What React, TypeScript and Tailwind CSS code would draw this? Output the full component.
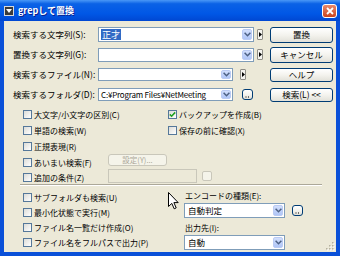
import React from "react";

const Chevron = () => (
  <svg width="7" height="5" viewBox="0 0 7 5">
    <path d="M0.6 0.8 L3.5 3.7 L6.4 0.8" fill="none" stroke="#4D6185" strokeWidth="1.5" />
  </svg>
);

function Combo({ className, children }: { className: string; children?: React.ReactNode }) {
  return (
    <div className={`flex items-stretch border border-[#7F9DB9] bg-white ${className}`}>
      <div className="flex flex-1 items-center overflow-hidden whitespace-nowrap pl-[2px]">{children}</div>
      <div className="m-[1px] flex w-[10px] items-center justify-center rounded-[2px] border border-[#BACBF4] bg-linear-to-b from-[#D2DFFD] to-[#AFC5F6]">
        <Chevron />
      </div>
    </div>
  );
}

function Btn({ className, children, disabled }: { className: string; children?: React.ReactNode; disabled?: boolean }) {
  return (
    <div
      className={`flex items-center justify-center rounded-[3px] border ${
        disabled
          ? "border-[#C9C7BA] bg-[#F5F4EA] text-[#ACA899]"
          : "border-[#003C74] bg-linear-to-b from-white via-[#F4F3EE] to-[#E2E1D9] text-black"
      } ${className}`}
    >
      {children}
    </div>
  );
}

function Arrow() {
  return (
    <div className="flex h-[11px] w-[6px] items-center justify-center rounded-[1px] border border-[#8E8D86] bg-[#F4F3EE]">
      <svg width="3" height="5" viewBox="0 0 3 5">
        <path d="M0 0 L3 2.5 L0 5Z" fill="#000" />
      </svg>
    </div>
  );
}

function Dots({ className }: { className: string }) {
  return (
    <Btn className={`h-[11px] w-[11px] ${className}`}>
      <svg width="5" height="9" viewBox="0 0 5 9">
        <rect x="0.5" y="6.5" width="1" height="1" fill="#000" />
        <rect x="3" y="6.5" width="1" height="1" fill="#000" />
      </svg>
    </Btn>
  );
}

function Box({ checked }: { checked?: boolean }) {
  return (
    <span className="flex h-[9px] w-[9px] shrink-0 items-center justify-center border border-[#55789A] bg-linear-to-br from-[#DCDCD7] to-white">
      {checked && (
        <svg width="7" height="7" viewBox="0 0 7 7">
          <path d="M0.8 3.4 L2.6 5.2 L6.2 1.4" fill="none" stroke="#21A121" strokeWidth="1.6" />
        </svg>
      )}
    </span>
  );
}

function Check({ label, checked, className = "" }: { label: string; checked?: boolean; className?: string }) {
  return (
    <div className={`flex items-center gap-[2px] whitespace-nowrap ${className}`}>
      <Box checked={checked} />
      <span>{label}</span>
    </div>
  );
}

export default function App() {
  return (
    <div className="relative flex h-[256px] w-[340px] flex-col overflow-hidden font-['Noto_Sans_CJK_JP','Noto_Sans',sans-serif] text-[8px] leading-[11px] text-black">
      {/* title bar */}
      <div className="flex h-[21px] shrink-0 items-center bg-[linear-gradient(to_bottom,#4A98F7_0%,#0B62E6_18%,#0057E6_65%,#0047D2_100%)] pl-[4px] pr-[3px]">
        <div className="flex h-[10px] w-[10px] items-center justify-center border border-[#D9D9D9] bg-[#3A3A3A]">
          <svg width="6" height="4" viewBox="0 0 6 4">
            <path d="M0 0 L6 0 L3 4Z" fill="#FFFFFF" />
          </svg>
        </div>
        <span className="ml-[4px] text-[9px] font-bold text-white [text-shadow:1px_1px_0_#0A1F8F]">grepして置換</span>
        <div className="ml-auto flex h-[14px] w-[15px] items-center justify-center rounded-[3px] border border-white bg-linear-to-b from-[#E9896A] to-[#C9421B]">
          <svg width="8" height="8" viewBox="0 0 8 8">
            <path d="M1 1 L7 7 M7 1 L1 7" stroke="#FFFFFF" strokeWidth="1.8" />
          </svg>
        </div>
      </div>

      {/* body */}
      <div className="relative flex flex-1 flex-col border-x-[4px] border-b-[4px] border-[#0A50D8] bg-[#ECE9D8]">
        {/* input rows */}
        <div className="flex flex-col gap-[5px] pl-[9px] pt-[6px] text-[8.5px]">
          <div className="flex h-[15px] items-center">
            <span className="w-[85px] whitespace-nowrap">検索する文字列(S):</span>
            <div className="flex w-[172px] items-center">
              <Combo className="h-[15px] w-[156px]">
                <span className="bg-[#316AC5] px-[1px] text-[9px] text-white">正才</span>
              </Combo>
              <div className="ml-[3px]">
                <Arrow />
              </div>
            </div>
            <Btn className="h-[16px] w-[63px]">置換</Btn>
          </div>
          <div className="flex h-[15px] items-center">
            <span className="w-[85px] whitespace-nowrap">置換する文字列(G):</span>
            <div className="flex w-[172px] items-center">
              <Combo className="h-[14px] w-[156px]" />
              <div className="ml-[3px]">
                <Arrow />
              </div>
            </div>
            <Btn className="h-[16px] w-[63px]">キャンセル</Btn>
          </div>
          <div className="flex h-[15px] items-center">
            <span className="w-[85px] whitespace-nowrap">検索するファイル(N):</span>
            <div className="flex w-[172px] items-center">
              <Combo className="h-[13px] w-[135px]" />
              <div className="ml-[7px]">
                <Arrow />
              </div>
            </div>
            <Btn className="h-[14px] w-[63px]">ヘルプ</Btn>
          </div>
          <div className="flex h-[15px] items-center">
            <span className="w-[85px] whitespace-nowrap">検索するフォルダ(D):</span>
            <div className="flex w-[172px] items-center">
              <Combo className="h-[13px] w-[135px]">
                <span className="text-[8px] tracking-[-0.2px]">C:¥Program Files¥NetMeeting</span>
              </Combo>
              <Dots className="ml-[9px]" />
            </div>
            <Btn className="h-[14px] w-[63px]">検索(L) &lt;&lt;</Btn>
          </div>
        </div>

        {/* option checkboxes */}
        <div className="mt-[4px] flex flex-col pl-[19px]">
          <div className="flex h-[16px] items-center">
            <Check className="w-[145px]" label="大文字/小文字の区別(C)" />
            <Check checked label="バックアップを作成(B)" />
          </div>
          <div className="flex h-[16px] items-center">
            <Check className="w-[145px]" label="単語の検索(W)" />
            <Check label="保存の前に確認(X)" />
          </div>
          <div className="flex h-[16px] items-center">
            <Check label="正規表現(R)" />
          </div>
          <div className="flex h-[16px] items-center">
            <Check className="w-[85px]" label="あいまい検索(F)" />
            <Btn disabled className="-mt-[5px] h-[12px] w-[59px] text-[7.5px]">
              設定(Y)...
            </Btn>
          </div>
          <div className="flex h-[14px] items-center">
            <Check className="w-[85px]" label="追加の条件(Z)" />
            <div className="-mt-[3px] h-[14px] w-[89px] border border-[#C9C7BA] bg-[#ECE9D8]" />
            <div className="ml-[5px] -mt-[3px] h-[10px] w-[10px] rounded-[2px] border border-[#C9C7BA] bg-[#F5F4EA]" />
          </div>
        </div>

        {/* separator */}
        <div className="ml-[16px] mr-[14px] h-[2px] border-t border-b border-t-[#ACA899] border-b-white" />

        {/* bottom section */}
        <div className="mt-[4px] flex">
          <div className="flex w-[180px] flex-col pl-[19px]">
            <Check className="h-[15px]" label="サブフォルダも検索(U)" />
            <Check className="h-[15px]" label="最小化状態で実行(M)" />
            <Check className="h-[15px]" label="ファイル名一覧だけ作成(O)" />
            <Check className="h-[15px]" label="ファイル名をフルパスで出力(P)" />
          </div>
          <div className="flex flex-col">
            <span className="h-[12px] whitespace-nowrap pl-[1px]">エンコードの種類(E):</span>
            <div className="mt-[1px] flex items-center">
              <Combo className="h-[15px] w-[101px]">
                <span className="pl-[1px] text-[8.5px]">自動判定</span>
              </Combo>
              <Dots className="ml-[7px]" />
            </div>
            <span className="mt-[4px] h-[12px] whitespace-nowrap pl-[1px]">出力先(I):</span>
            <div className="mt-[1px] flex items-center">
              <Combo className="h-[15px] w-[101px]">
                <span className="pl-[1px] text-[8.5px]">自動</span>
              </Combo>
            </div>
          </div>
        </div>

        {/* resize grip */}
        <svg className="absolute bottom-[1px] right-[1px]" width="10" height="10" viewBox="0 0 10 10">
          {[
            [8, 2],
            [8, 5],
            [5, 5],
            [8, 8],
            [5, 8],
            [2, 8],
          ].map(([x, y], i) => (
            <g key={i}>
              <rect x={x} y={y} width="1.5" height="1.5" fill="#FFFFFF" />
              <rect x={x - 1} y={y - 1} width="1.5" height="1.5" fill="#B5B29F" />
            </g>
          ))}
        </svg>
      </div>

      {/* mouse cursor */}
      <svg className="absolute left-[168px] top-[192px]" width="11" height="18" viewBox="0 0 11 18">
        <path d="M0.5 0.5 L0.5 14.5 L3.8 11.4 L6.2 16.8 L8.2 15.9 L5.9 10.6 L10.2 10.6 Z" fill="#FFFFFF" stroke="#000" strokeWidth="1" />
      </svg>
    </div>
  );
}
